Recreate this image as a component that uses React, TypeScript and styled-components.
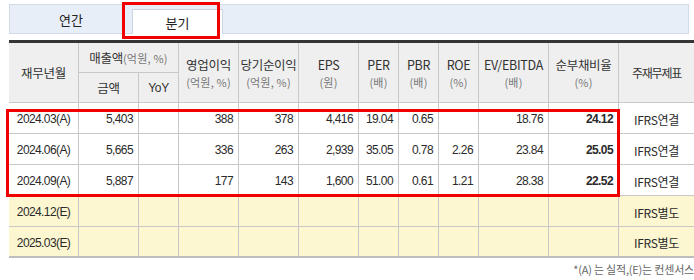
import React from "react";
import styled, { createGlobalStyle } from "styled-components";

const Global = createGlobalStyle`
  html, body { margin: 0; padding: 0; background: #fff; overflow: hidden; }
  body { font-family: "Liberation Sans", "Noto Sans CJK KR", sans-serif; color: #333; }
`;

const Page = styled.div`
  position: relative;
  width: 694px;
  height: 280px;
  padding: 4px 0 0 9px;
  box-sizing: border-box;
`;

const TabStrip = styled.div`
  display: flex;
  align-items: flex-end;
  width: 680px;
  height: 30px;
  box-sizing: border-box;
  background: #e8eef8;
  border: 1px solid #d3dbe8;
`;

const Tab = styled.div<{ $active?: boolean; $w: number }>`
  width: ${(p) => p.$w}px;
  height: ${(p) => (p.$active ? 25 : 28)}px;
  box-sizing: border-box;
  display: flex;
  align-items: center;
  justify-content: center;
  font-family: "Noto Sans CJK KR", sans-serif;
  font-size: 13px;
  color: #222;
  background: ${(p) => (p.$active ? "#fff" : "transparent")};
  border: ${(p) => (p.$active ? "1px solid #cdd5e2" : "none")};
  border-bottom: none;
  margin-bottom: ${(p) => (p.$active ? -1 : 0)}px;
  padding-top: ${(p) => (p.$active ? 1 : 0)}px;
`;

const Table = styled.table`
  margin-top: 6px;
  width: 685px;
  table-layout: fixed;
  border-collapse: separate;
  border-spacing: 0;
  border-top: 3px solid #353535;
`;

const HeadRow = styled.tr`
  height: 30px;
`;

const Th = styled.th<{ $last?: boolean }>`
  background: #efefef;
  font-weight: normal;
  font-family: "Noto Sans CJK KR", sans-serif;
  font-size: 12.5px;
  color: #333;
  line-height: 16px;
  padding: 0;
  text-align: center;
  vertical-align: middle;
  border-bottom: 1px solid #c8c8c8;
  border-right: ${(p) => (p.$last ? "none" : "1px solid #c8c8c8")};
  letter-spacing: -0.3px;
  white-space: nowrap;
`;

const Sub = styled.span<{ $inline?: boolean }>`
  display: ${(p) => (p.$inline ? "inline" : "block")};
  font-size: 11px;
  color: #777;
  line-height: 14px;
  margin-top: ${(p) => (p.$inline ? 0 : 2)}px;
  letter-spacing: 0.2px;
`;

const Narrow = styled.span`
  font-size: 12px;
  letter-spacing: -1.2px;
`;

const Row = styled.tr<{ $est?: boolean }>`
  height: 31px;
  background: ${(p) => (p.$est ? "#fcf6d1" : "#fff")};
`;

const Td = styled.td<{ $align?: string; $bold?: boolean; $last?: boolean; $bottom?: boolean }>`
  padding: 2px 5px 0 5px;
  font-size: 12px;
  letter-spacing: -0.6px;
  color: #2a2a2a;
  text-align: ${(p) => p.$align || "right"};
  font-weight: ${(p) => (p.$bold ? "bold" : "normal")};
  border-right: ${(p) => (p.$last ? "none" : "1px solid #c8c8c8")};
  border-bottom: ${(p) => (p.$bottom ? "2px solid #bdbdbd" : "1px solid #c8c8c8")};
  white-space: nowrap;
  vertical-align: middle;
`;

const Kor = styled.span`
  font-family: "Noto Sans CJK KR", sans-serif;
  letter-spacing: -0.3px;
`;

const Footnote = styled.div`
  width: 685px;
  margin-top: 3px;
  text-align: right;
  white-space: nowrap;
  overflow: hidden;
  font-family: "Noto Sans CJK KR", sans-serif;
  font-size: 11px;
  color: #666;
  letter-spacing: -0.2px;
`;

const Highlight = styled.div<{ $x: number; $y: number; $w: number; $h: number }>`
  position: absolute;
  left: ${(p) => p.$x}px;
  top: ${(p) => p.$y}px;
  width: ${(p) => p.$w}px;
  height: ${(p) => p.$h}px;
  box-sizing: border-box;
  border: 3px solid #f20000;
  pointer-events: none;
`;

const widths = [70, 60, 40, 60, 60, 60, 40, 40, 40, 70, 70, 75];

type R = { d: string; v: string[]; fs: string; est?: boolean };
const rows: R[] = [
  { d: "2024.03(A)", v: ["5,403", "", "388", "378", "4,416", "19.04", "0.65", "", "18.76", "24.12"], fs: "IFRS연결" },
  { d: "2024.06(A)", v: ["5,665", "", "336", "263", "2,939", "35.05", "0.78", "2.26", "23.84", "25.05"], fs: "IFRS연결" },
  { d: "2024.09(A)", v: ["5,887", "", "177", "143", "1,600", "51.00", "0.61", "1.21", "28.38", "22.52"], fs: "IFRS연결" },
  { d: "2024.12(E)", v: ["", "", "", "", "", "", "", "", "", ""], fs: "IFRS별도", est: true },
  { d: "2025.03(E)", v: ["", "", "", "", "", "", "", "", "", ""], fs: "IFRS별도", est: true },
];

const heads: [string, string][] = [
  ["영업이익", "(억원, %)"],
  ["당기순이익", "(억원, %)"],
  ["EPS", "(원)"],
  ["PER", "(배)"],
  ["PBR", "(배)"],
  ["ROE", "(%)"],
  ["EV/EBITDA", "(배)"],
  ["순부채비율", "(%)"],
];

export default function App() {
  return (
    <>
      <Global />
      <Page>
        <TabStrip>
          <Tab $w={122}>연간</Tab>
          <Tab $w={91} $active>분기</Tab>
        </TabStrip>
        <Table>
          <colgroup>
            {widths.map((w, i) => (
              <col key={i} style={{ width: w }} />
            ))}
          </colgroup>
          <thead>
            <HeadRow>
              <Th rowSpan={2}>재무년월</Th>
              <Th colSpan={2}>
                매출액<Sub $inline>(억원, %)</Sub>
              </Th>
              {heads.map(([a, b]) => (
                <Th key={a} rowSpan={2}>
                  {a}
                  <Sub>{b}</Sub>
                </Th>
              ))}
              <Th rowSpan={2} $last>
                <Narrow>주재무제표</Narrow>
              </Th>
            </HeadRow>
            <HeadRow>
              <Th>금액</Th>
              <Th style={{ fontFamily: "Liberation Sans, sans-serif", fontSize: 12 }}>YoY</Th>
            </HeadRow>
          </thead>
          <tbody>
            {rows.map((r, ri) => {
              const bottom = ri === rows.length - 1;
              return (
                <Row key={r.d} $est={r.est}>
                  <Td $align="center" $bottom={bottom}>{r.d}</Td>
                  {r.v.map((val, i) => (
                    <Td key={i} $bold={i === 9} $bottom={bottom}>
                      {val}
                    </Td>
                  ))}
                  <Td $align="center" $last $bottom={bottom}>
                    <Kor>{r.fs}</Kor>
                  </Td>
                </Row>
              );
            })}
          </tbody>
        </Table>
        <Footnote>*(A) 는 실적,(E)는 컨센서스</Footnote>
        <Highlight $x={122} $y={2} $w={98} $h={37} />
        <Highlight $x={6} $y={109} $w={614} $h={88} />
      </Page>
    </>
  );
}
